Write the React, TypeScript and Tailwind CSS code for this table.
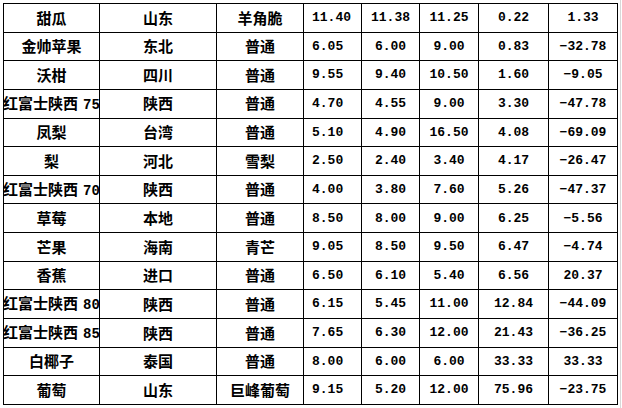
import React from 'react';

type Row = [string, string, string, string, string, string, string, string];

const rows: Row[] = [
  ['甜瓜', '山东', '羊角脆', '11.40', '11.38', '11.25', '0.22', '1.33'],
  ['金帅苹果', '东北', '普通', '6.05', '6.00', '9.00', '0.83', '−32.78'],
  ['沃柑', '四川', '普通', '9.55', '9.40', '10.50', '1.60', '−9.05'],
  ['红富士陕西 75', '陕西', '普通', '4.70', '4.55', '9.00', '3.30', '−47.78'],
  ['凤梨', '台湾', '普通', '5.10', '4.90', '16.50', '4.08', '−69.09'],
  ['梨', '河北', '雪梨', '2.50', '2.40', '3.40', '4.17', '−26.47'],
  ['红富士陕西 70', '陕西', '普通', '4.00', '3.80', '7.60', '5.26', '−47.37'],
  ['草莓', '本地', '普通', '8.50', '8.00', '9.00', '6.25', '−5.56'],
  ['芒果', '海南', '青芒', '9.05', '8.50', '9.50', '6.47', '−4.74'],
  ['香蕉', '进口', '普通', '6.50', '6.10', '5.40', '6.56', '20.37'],
  ['红富士陕西 80', '陕西', '普通', '6.15', '5.45', '11.00', '12.84', '−44.09'],
  ['红富士陕西 85', '陕西', '普通', '7.65', '6.30', '12.00', '21.43', '−36.25'],
  ['白椰子', '泰国', '普通', '8.00', '6.00', '6.00', '33.33', '33.33'],
  ['葡萄', '山东', '巨峰葡萄', '9.15', '5.20', '12.00', '75.96', '−23.75'],
];

function NameCell({ text }: { text: string }) {
  const m = text.match(/^(.*?) (\d+)$/);
  if (!m) return <span>{text}</span>;
  return (
    <span className="whitespace-nowrap">
      {m[1]}
      <span className="text-[14px] font-['Liberation_Mono',monospace] ml-[5px]">{m[2]}</span>
    </span>
  );
}

export default function App() {
  return (
    <div className="w-[622px] h-[408px] bg-white pl-[3px] pt-[3px] relative">
      <div className="absolute right-[1px] top-0 h-[408px] w-px bg-[#d8d8d8]" />
      <div className="grid grid-cols-[96px_117px_87px_58px_58px_59px_70px_69px] grid-rows-[repeat(14,1fr)] w-[615px] h-[402px] border-l border-t border-black text-black font-bold">
        {rows.map((r, i) => (
          <React.Fragment key={i}>
            <div className="border-r border-b border-black flex items-center justify-center text-[15px] font-['Noto_Sans_CJK_SC',sans-serif] whitespace-nowrap overflow-visible">
              <NameCell text={r[0]} />
            </div>
            <div className="border-r border-b border-black flex items-center justify-center text-[15px] font-['Noto_Sans_CJK_SC',sans-serif]">
              {r[1]}
            </div>
            <div className="border-r border-b border-black flex items-center justify-center text-[15px] font-['Noto_Sans_CJK_SC',sans-serif]">
              {r[2]}
            </div>
            <div className="border-r border-b border-black flex items-center justify-start pl-[8px] text-[13px] font-['Liberation_Mono',monospace]">
              {r[3]}
            </div>
            {r.slice(4).map((v, j) => (
              <div
                key={j}
                className="border-r border-b border-black flex items-center justify-center text-[13px] font-['Liberation_Mono',monospace]"
              >
                {v}
              </div>
            ))}
          </React.Fragment>
        ))}
      </div>
    </div>
  );
}
